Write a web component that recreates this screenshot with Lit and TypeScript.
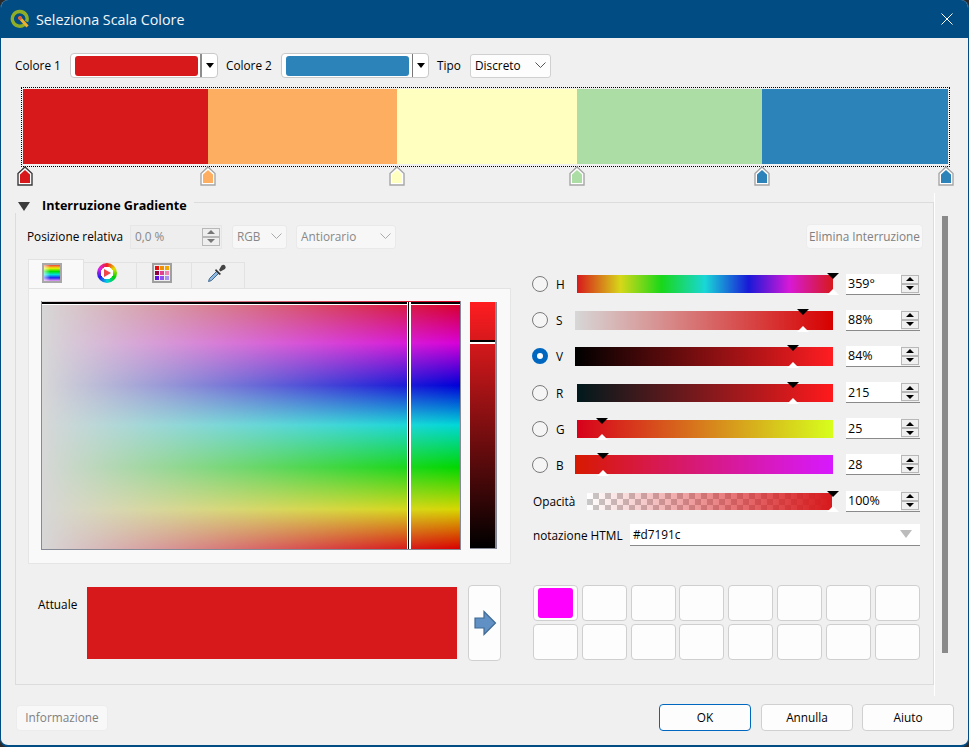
import { LitElement, css, html } from "lit";
import { customElement } from "lit/decorators.js";

const SEGMENTS = [
  { color: "#d7191c", flex: 185 },
  { color: "#fdae61", flex: 189 },
  { color: "#ffffbf", flex: 180 },
  { color: "#abdda4", flex: 185 },
  { color: "#2b83ba", flex: 186 },
];

const STOPS = [
  { color: "#d7191c", x: 25, active: true },
  { color: "#fdae61", x: 208, active: false },
  { color: "#ffffbf", x: 397, active: false },
  { color: "#abdda4", x: 577, active: false },
  { color: "#2b83ba", x: 762, active: false },
  { color: "#2b83ba", x: 946, active: false },
];

const TAB_WIDTHS = [56, 53, 55, 53];

const HUE =
  "linear-gradient(to right,#d7191c,#d7d719 17%,#19d719 33%,#19d7d7 50%,#1919d7 67%,#d719d7 83%,#d7191c)";

const SLIDERS = [
  { name: "H", value: "359°", pos: 100, inset: true, bg: HUE, checked: false },
  { name: "S", value: "88%", pos: 88.4, inset: false, bg: "linear-gradient(to right,#d7d7d7,#d70000)", checked: false },
  { name: "V", value: "84%", pos: 84.5, inset: false, bg: "linear-gradient(to right,#000,#ff1d21)", checked: true },
  { name: "R", value: "215", pos: 84.3, inset: true, bg: "linear-gradient(to right,#00191c,#ff191c)", checked: false },
  { name: "G", value: "25", pos: 9.8, inset: true, bg: "linear-gradient(to right,#d7001c,#d7ff1c)", checked: false },
  { name: "B", value: "28", pos: 11, inset: false, bg: "linear-gradient(to right,#d71900,#d719ff)", checked: false },
];

@customElement("app-root")
export class AppRoot extends LitElement {
  spinButtons() {
    return html`<span class="spin-btns">
      <span class="spin-btn"><i class="tri-up"></i></span>
      <span class="spin-btn"><i class="tri-down"></i></span>
    </span>`;
  }

  colorCombo(color: string, focused: boolean) {
    return html`<div class="color-combo">
      <span class="color-fill" style="background:${color}"></span>
      <span class="color-sep ${focused ? "thick" : ""}"></span>
      <i class="combo-arrow"></i>
    </div>`;
  }

  chevron() {
    return html`<svg class="chevron" width="11" height="6" viewBox="0 0 11 6">
      <path d="M.5.5l5 5 5-5" fill="none" stroke="currentColor" />
    </svg>`;
  }

  stopMarker(stop: { color: string; x: number; active: boolean }) {
    const edge = stop.active ? "#3a3a3a" : "#a6a6a6";
    return html`<svg class="stop" style="left:${stop.x - 8 - 1}px" width="16" height="20" viewBox="0 0 16 20">
      <path d="M1 7.5 8 1l7 6.500V19H1z" fill="#fff" stroke=${edge} stroke-width="1.400" />
      <path d="M3 8.500 8 4l5 4.500V17H3z" fill=${stop.color} />
    </svg>`;
  }

  logo() {
    return html`<svg class="logo" width="20" height="20" viewBox="0 0 20 20">
      <path d="M14.500 15.500A7.400 7.400 0 1 1 16.600 12.600" fill="none" stroke="#8fae27" stroke-width="3.400" />
      <path d="M9 8l8.500 9.500" stroke="#f0b030" stroke-width="3" />
      <circle cx="10" cy="9" r="2" fill="#e2603a" />
    </svg>`;
  }

  tabIcons() {
    const grid = ["#e01010", "#f09000", "#f0a800", "#900040", "#e04090", "#f080b0", "#6010e0", "#9050f0", "#a890f0"];
    return [
      html`<span class="ic-ramp"></span>`,
      html`<span class="ic-wheel"><svg width="10" height="10" viewBox="0 0 10 10"><path d="M2 1l7 4-7 4z" fill="#f04848" /></svg></span>`,
      html`<span class="ic-grid">${grid.map((c) => html`<i style="background:${c}"></i>`)}</span>`,
      html`<svg width="20" height="20" viewBox="0 0 20 20">
        <path d="M1.500 18.500l1-3L10 8l2 2-7.500 7.500z" fill="#8fb8e0" stroke="#3f6a94" />
        <path d="M9 6l5 5-1.500 1-4.500-4.500z" fill="#333" />
        <path d="M12 7l2.500-4.500q2-1.500 3.500 0t0 3.500L13.500 8.500z" fill="#444" />
      </svg>`,
    ];
  }

  slider(s: (typeof SLIDERS)[number]) {
    return html`<div class="row">
      <span class="radio ${s.checked ? "checked" : ""}"></span>
      <span class="row-name">${s.name}</span>
      <div class="track ${s.inset ? "inset" : ""} ${s.pos === 100 ? "end" : ""}" style="background:${s.bg}">
        <i class="mark-top" style="left:${s.pos}%"></i>
        <i class="mark-bottom" style="left:${s.pos}%"></i>
      </div>
      <div class="spin"><span class="spin-text">${s.value}</span>${this.spinButtons()}</div>
    </div>`;
  }

  render() {
    const icons = this.tabIcons();
    return html`
      <div class="window">
        <header class="titlebar">
          ${this.logo()}
          <span class="title">Seleziona Scala Colore</span>
          <svg class="close" width="12" height="12" viewBox="0 0 12 12">
            <path d="M.5.5l11 11m0-11l-11 11" stroke="#fff" fill="none" />
          </svg>
        </header>

        <div class="top-row">
          <label class="w45">Colore 1</label>
          ${this.colorCombo("#d7191c", true)}
          <label class="w45 l8">Colore 2</label>
          ${this.colorCombo("#2b83ba", false)}
          <label class="w25 l8">Tipo</label>
          <div class="combo tipo">Discreto ${this.chevron()}</div>
        </div>

        <div class="ramp">
          ${SEGMENTS.map((s) => html`<span style="background:${s.color};flex:${s.flex}"></span>`)}
        </div>
        <div class="stops">${STOPS.map((s) => this.stopMarker(s))}</div>

        <div class="scroll">
          <div class="group">
            <div class="group-head">
              <i class="expander"></i>
              <span class="group-title">Interruzione Gradiente</span>
              <span class="group-line"></span>
            </div>
            <div class="group-body">
              <div class="pos-row">
                <span class="pos-label">Posizione relativa</span>
                <div class="pos-input"><span>0,0 %</span>${this.spinButtons()}</div>
                <div class="combo off rgb">RGB ${this.chevron()}</div>
                <div class="combo off dir">Antiorario ${this.chevron()}</div>
                <button class="btn off remove">Elimina Interruzione</button>
              </div>

              <div class="columns">
                <div class="left">
                  <div class="tabs">
                    ${icons.map(
                      (icon, i) =>
                        html`<div class="tab ${i === 0 ? "current" : ""}" style="width:${TAB_WIDTHS[i]}px">
                          <span class="tab-icon t${i}">${icon}</span>
                        </div>`,
                    )}
                  </div>
                  <div class="panel">
                    <div class="box">
                      <i class="box-h"></i>
                      <i class="box-v"></i>
                    </div>
                    <div class="strip"><i class="strip-h"></i></div>
                  </div>
                </div>

                <div class="right">
                  ${SLIDERS.map((s) => this.slider(s))}
                  <div class="row">
                    <span class="opacity-name">Opacità</span>
                    <div class="track opacity end">
                      <i class="mark-top" style="left:100%"></i>
                      <i class="mark-bottom" style="left:100%"></i>
                    </div>
                    <div class="spin"><span class="spin-text">100%</span>${this.spinButtons()}</div>
                  </div>
                  <div class="html-row">
                    <span class="html-name">notazione HTML</span>
                    <div class="html-field">#d7191c<i class="html-arrow"></i></div>
                  </div>
                </div>
              </div>

              <div class="columns bottom">
                <div class="current">
                  <span class="current-label">Attuale</span>
                  <div class="current-color"></div>
                  <button class="add">
                    <svg width="24" height="26" viewBox="0 0 24 26">
                      <path d="M2 8h9V1.500L22.500 13 11 24.500V18H2z" fill="#6090c4" stroke="#3f6a94" stroke-width="1.200" />
                    </svg>
                  </button>
                </div>
                <div class="swatches">
                  ${Array.from({ length: 16 }, (_, i) =>
                    html`<div class="swatch">${i === 0 ? html`<i class="swatch-fill"></i>` : ""}</div>`,
                  )}
                </div>
              </div>
            </div>
          </div>
          <div class="scrollbar"><span class="thumb"></span></div>
        </div>

        <footer class="footer">
          <button class="btn off info">Informazione</button>
          <span class="spacer"></span>
          <button class="btn action default">OK</button>
          <button class="btn action">Annulla</button>
          <button class="btn action last">Aiuto</button>
        </footer>
      </div>
    `;
  }

  static styles = css`
    :host {
      display: block;
      width: 969px;
      height: 747px;
      overflow: hidden;
      background: #2a2a2a;
      font-family: "Open Sans", "Noto Sans", sans-serif;
      font-size: 11.8px;
      color: #000;
    }
    * {
      box-sizing: border-box;
    }
    i {
      display: block;
    }
    .window {
      width: 969px;
      height: 747px;
      display: flex;
      flex-direction: column;
      background: #f0f0f0;
      border: solid #024c84;
      border-width: 0 1px 2px 1px;
      border-radius: 8px;
      overflow: hidden;
    }
    .titlebar {
      flex: none;
      height: 38px;
      background: #024c84;
      display: flex;
      align-items: center;
      padding: 0 15px 0 9px;
      color: #f2f6fa;
    }
    .logo {
      margin-right: 6px;
    }
    .title {
      flex: 1;
      font-size: 14.3px;
    }
    .top-row {
      flex: none;
      height: 25px;
      margin: 15px 0 0 14px;
      display: flex;
      align-items: center;
    }
    .w45 {
      width: 45px;
      margin-right: 10px;
      padding-bottom: 2px;
      white-space: nowrap;
    }
    .w25 {
      width: 25px;
      margin-right: 8px;
      padding-bottom: 2px;
    }
    .l8 {
      margin-left: 8px;
    }
    .color-combo {
      width: 148px;
      height: 25px;
      background: #fff;
      border: 1px solid #c9c9c9;
      border-radius: 4px;
      display: flex;
      align-items: center;
      padding-left: 4px;
    }
    .color-fill {
      width: 123px;
      height: 20px;
      border-radius: 3px;
    }
    .color-sep {
      width: 1px;
      height: 23px;
      background: #777;
      margin-left: 3px;
    }
    .color-sep.thick {
      width: 2px;
      margin-left: 2px;
      background: #8c8c8c;
    }
    .combo-arrow {
      margin-left: 4px;
      border: 4px solid transparent;
      border-top: 5px solid #000;
      border-bottom: 0;
    }
    .combo {
      height: 24px;
      background: #fdfdfd;
      border: 1px solid #d0d0d0;
      border-radius: 3px;
      display: flex;
      align-items: center;
      justify-content: space-between;
      padding: 0 4px 2px;
    }
    .tipo {
      width: 81px;
    }
    .chevron {
      color: #555;
    }
    .combo.off {
      background: #f7f7f7;
      border-color: #e9e9e9;
      color: #888;
      height: 24px;
    }
    .combo.off .chevron {
      color: #aaa;
    }
    .rgb {
      width: 55px;
      margin-left: 10px;
    }
    .dir {
      width: 100px;
      margin-left: 9px;
    }
    .ramp {
      flex: none;
      height: 80px;
      width: 929px;
      margin: 9px 0 0 20px;
      padding: 1px 1px 2px;
      display: flex;
      border: 1px dotted #000;
    }
    .stops {
      flex: none;
      position: relative;
      height: 20px;
    }
    .stop {
      position: absolute;
      top: -1px;
    }
    .scroll {
      flex: none;
      height: 503px;
      margin: 6px 0 0 14px;
      width: 934px;
      display: flex;
    }
    .group {
      width: 919px;
      flex: none;
      display: flex;
      flex-direction: column;
      height: 492px;
    }
    .group-head {
      height: 20px;
      display: flex;
      align-items: flex-start;
      flex: none;
    }
    .expander {
      margin: 9px 0 0 3px;
      border: 6.5px solid transparent;
      border-top: 9px solid #3c3c3c;
      border-bottom: 0;
    }
    .group-title {
      margin: 4px 0 0 12px;
      font-weight: 700;
      font-size: 12.6px;
      width: 152px;
      white-space: nowrap;
      flex: none;
    }
    .group-line {
      flex: 1;
      height: 20px;
      margin-top: 9px;
      border-top: 1px solid #dcdcdc;
      border-right: 1px solid #dcdcdc;
    }
    .group-body {
      flex: 1;
      border: 1px solid #dcdcdc;
      border-top: 0;
      padding: 11px 0 0 12px;
    }
    .pos-row {
      display: flex;
      align-items: center;
      height: 25px;
    }
    .pos-label {
      width: 103px;
      margin-left: -1px;
      padding-bottom: 2px;
      white-space: nowrap;
    }
    .pos-input {
      width: 92px;
      height: 24px;
      display: flex;
      align-items: center;
      justify-content: space-between;
      padding: 0 0 0 4px;
      background: #eeeeee;
      border: 1px solid #e6e6e6;
      color: #888;
    }
    .pos-input > span:first-child {
      padding-bottom: 2px;
    }
    .remove {
      margin-left: auto;
      margin-right: 10px;
      width: 117px;
      height: 25px;
    }
    .btn {
      font: inherit;
      background: #fdfdfd;
      border: 1px solid #d0d0d0;
      border-radius: 4px;
      padding: 0 0 2px;
      white-space: nowrap;
    }
    .btn.off {
      background: #f8f8f8;
      border-color: #ececec;
      color: #808080;
    }
    .columns {
      display: flex;
      margin-top: 10px;
    }
    .left {
      width: 483px;
      flex: none;
    }
    .tabs {
      display: flex;
      height: 29px;
      align-items: flex-end;
    }
    .tab {
      height: 26px;
      display: flex;
      justify-content: center;
      border: 1px solid #e2e2e2;
      border-left: 0;
      border-bottom: 0;
      background: #f0f0f0;
    }
    .tab.current {
      height: 29px;
      background: #f9f9f9;
      border-left: 1px solid #e2e2e2;
      padding-top: 3px;
    }
    .tab-icon {
      display: flex;
      width: 20px;
      height: 20px;
    }
    .t0 {
      margin-right: 9px;
    }
    .t1 {
      margin-right: 6px;
    }
    .t2 {
      margin-right: 5px;
    }
    .t3 {
      margin-right: 2px;
    }
    .ic-ramp {
      width: 20px;
      height: 20px;
      border: 2px solid #a8a8a8;
      background:
        linear-gradient(to right, rgba(255, 255, 255, 0.6), transparent 40%),
        linear-gradient(to bottom, #f04040, #f0f000, #00e000, #00e0e0, #2020f0, #f0a0f0);
    }
    .ic-wheel {
      width: 20px;
      height: 20px;
      border-radius: 50%;
      display: flex;
      align-items: center;
      justify-content: center;
      background: radial-gradient(circle, #fff 0 6px, transparent 6.5px),
        conic-gradient(#f02020, #e0e000, #00d000, #00d0e0, #2020f0, #e020e0, #f02020);
    }
    .ic-grid {
      width: 20px;
      height: 20px;
      border: 2px solid #a0a0a0;
      background: #eee;
      display: grid;
      grid-template-columns: repeat(3, 1fr);
      gap: 1px;
      padding: 1px;
    }
    .panel {
      height: 276px;
      background: #f9f9f9;
      border: 1px solid #e5e5e5;
      border-top: 1px solid #e2e2e2;
      padding: 12px 0 0 12px;
      display: flex;
      align-items: flex-start;
    }
    .box {
      position: relative;
      width: 420px;
      height: 249px;
      border: 1px solid #858a96;
      border-top: 0;
      background:
        linear-gradient(to right, #d7d7d7, rgba(215, 215, 215, 0)),
        linear-gradient(
          to bottom,
          #d7001c,
          #d700d7 17%,
          #0000d7 34%,
          #00d7d7 50%,
          #00d700 67%,
          #d7d700 84%,
          #d70000
        );
    }
    .box-h {
      position: absolute;
      left: 0;
      right: 0;
      top: 1px;
      height: 3px;
      border-top: 2px solid #000;
      border-bottom: 1px solid #fff;
    }
    .box-v {
      position: absolute;
      top: 1px;
      bottom: 0;
      left: 365px;
      width: 4px;
      background: #000;
      border-left: 1px solid #fff;
      border-right: 2px solid #fff;
    }
    .strip {
      position: relative;
      margin: 1px 0 0 9px;
      width: 27px;
      height: 247px;
      border: solid #858a96;
      border-width: 0 2px 1px 0;
      background: linear-gradient(to bottom, #ff1d21, #000);
    }
    .strip-h {
      position: absolute;
      left: 0;
      right: 0;
      top: 38px;
      height: 4px;
      border-top: 2px solid #000;
      border-bottom: 2px solid #fff;
    }
    .right {
      width: 387px;
      margin-left: 22px;
      padding-top: 14px;
      display: flex;
      flex-direction: column;
      gap: 14.2px;
    }
    .row {
      height: 22px;
      display: flex;
      align-items: center;
    }
    .radio {
      width: 16px;
      height: 16px;
      margin-left: -1px;
      border-radius: 50%;
      border: 1px solid #7a7a7a;
      background: #f5f5f5;
      flex: none;
    }
    .radio.checked {
      border: 5px solid #0067c0;
      background: #fff;
    }
    .row-name {
      width: 19px;
      margin-left: 8px;
      flex: none;
    }
    .opacity-name {
      width: 54px;
      flex: none;
    }
    .track {
      position: relative;
      width: 258px;
      height: 19px;
      flex: none;
    }
    .track.inset {
      width: 256px;
      height: 18px;
      margin-left: 2px;
    }
    .track.end {
      border-radius: 0 3px 3px 0;
    }
    .track.opacity {
      width: 245px;
      height: 17px;
      margin-right: 1px;
      background:
        linear-gradient(to right, rgba(215, 25, 28, 0), #d7191c),
        repeating-conic-gradient(#c8c8c8 0 25%, #fff 0 50%) 0 0 / 12px 12px;
    }
    .mark-top,
    .mark-bottom {
      position: absolute;
      width: 0;
      margin-left: -6px;
      border: 6px solid transparent;
    }
    .track.opacity .mark-top,
    .track.opacity .mark-bottom {
      margin-left: -5px;
    }
    .mark-top {
      top: -2px;
      border-top: 6px solid #000;
      border-bottom: 0;
    }
    .mark-bottom {
      bottom: -2px;
      border-bottom: 6px solid #fff;
      border-top: 0;
    }
    .spin {
      width: 74px;
      height: 21px;
      margin-left: 13px;
      background: #fff;
      border-bottom: 1px solid #8a8a8a;
      display: flex;
      align-items: center;
      justify-content: space-between;
      padding-left: 2px;
      flex: none;
      position: relative;
    }
    .spin-text {
      font-size: 12.5px;
    }
    .spin-btns {
      width: 19px;
      height: 20px;
      background: #f0f0f0;
      display: flex;
      flex-direction: column;
      justify-content: center;
      flex: none;
    }
    .spin-btn {
      width: 18px;
      height: 9px;
      border: 1px solid #b8b8b8;
      display: flex;
      align-items: center;
      justify-content: center;
    }
    .tri-up {
      border: 4px solid transparent;
      border-bottom: 4px solid #000;
      border-top: 0;
    }
    .tri-down {
      border: 4px solid transparent;
      border-top: 4px solid #000;
      border-bottom: 0;
    }
    .pos-input .tri-up {
      border-bottom-color: #777;
    }
    .pos-input .tri-down {
      border-top-color: #777;
    }
    .pos-input .spin-btns {
      background: transparent;
    }
    .html-row {
      display: flex;
      align-items: center;
      height: 22px;
      margin-top: -2.6px;
    }
    .html-name {
      width: 97px;
      white-space: nowrap;
      flex: none;
    }
    .html-field {
      width: 290px;
      height: 22px;
      background: #fff;
      border-bottom: 1px solid #8a8a8a;
      padding-left: 3px;
      display: flex;
      align-items: center;
      justify-content: space-between;
      padding-right: 8px;
    }
    .html-arrow {
      border: 6px solid transparent;
      border-top: 8px solid #bcbcbc;
      border-bottom: 0;
    }
    .bottom {
      margin-top: 21px;
    }
    .current {
      width: 473px;
      display: flex;
      align-items: flex-start;
      flex: none;
    }
    .current-label {
      width: 59px;
      padding: 11px 0 0 10px;
      flex: none;
    }
    .current-color {
      width: 370px;
      height: 72px;
      margin-top: 2px;
      background: #d7191c;
      flex: none;
    }
    .add {
      width: 33px;
      height: 76px;
      margin-left: 11px;
      background: #fdfdfd;
      border: 1px solid #d0d0d0;
      border-radius: 4px;
      padding: 0;
      display: flex;
      align-items: center;
      justify-content: center;
      flex: none;
    }
    .swatches {
      width: 387px;
      margin-left: 32px;
      display: grid;
      grid-template-columns: repeat(8, 45px);
      grid-auto-rows: 36px;
      column-gap: 3.8px;
      row-gap: 3px;
      flex: none;
    }
    .swatch {
      background: #fdfdfd;
      border: 1px solid #cfcfcf;
      border-radius: 4px;
      padding: 2px 4px;
    }
    .swatch-fill {
      height: 30px;
      background: #ff00ff;
      border-radius: 3px;
    }
    .scrollbar {
      flex: 1;
      border-left: 1px solid #fff;
      position: relative;
    }
    .thumb {
      position: absolute;
      left: 7px;
      top: 23px;
      width: 6px;
      height: 437px;
      background: #8a8a8a;
    }
    .footer {
      flex: none;
      height: 27px;
      margin: 8px 14px 0 15px;
      display: flex;
      align-items: center;
    }
    .spacer {
      flex: 1;
    }
    .info {
      width: 92px;
      height: 26px;
    }
    .action {
      width: 92px;
      height: 27px;
      margin-left: 10px;
    }
    .action.last {
      margin-left: 9px;
    }
    .action.default {
      border: 1px solid #0067c0;
    }
  `;
}

declare global {
  interface HTMLElementTagNameMap {
    "app-root": AppRoot;
  }
}
